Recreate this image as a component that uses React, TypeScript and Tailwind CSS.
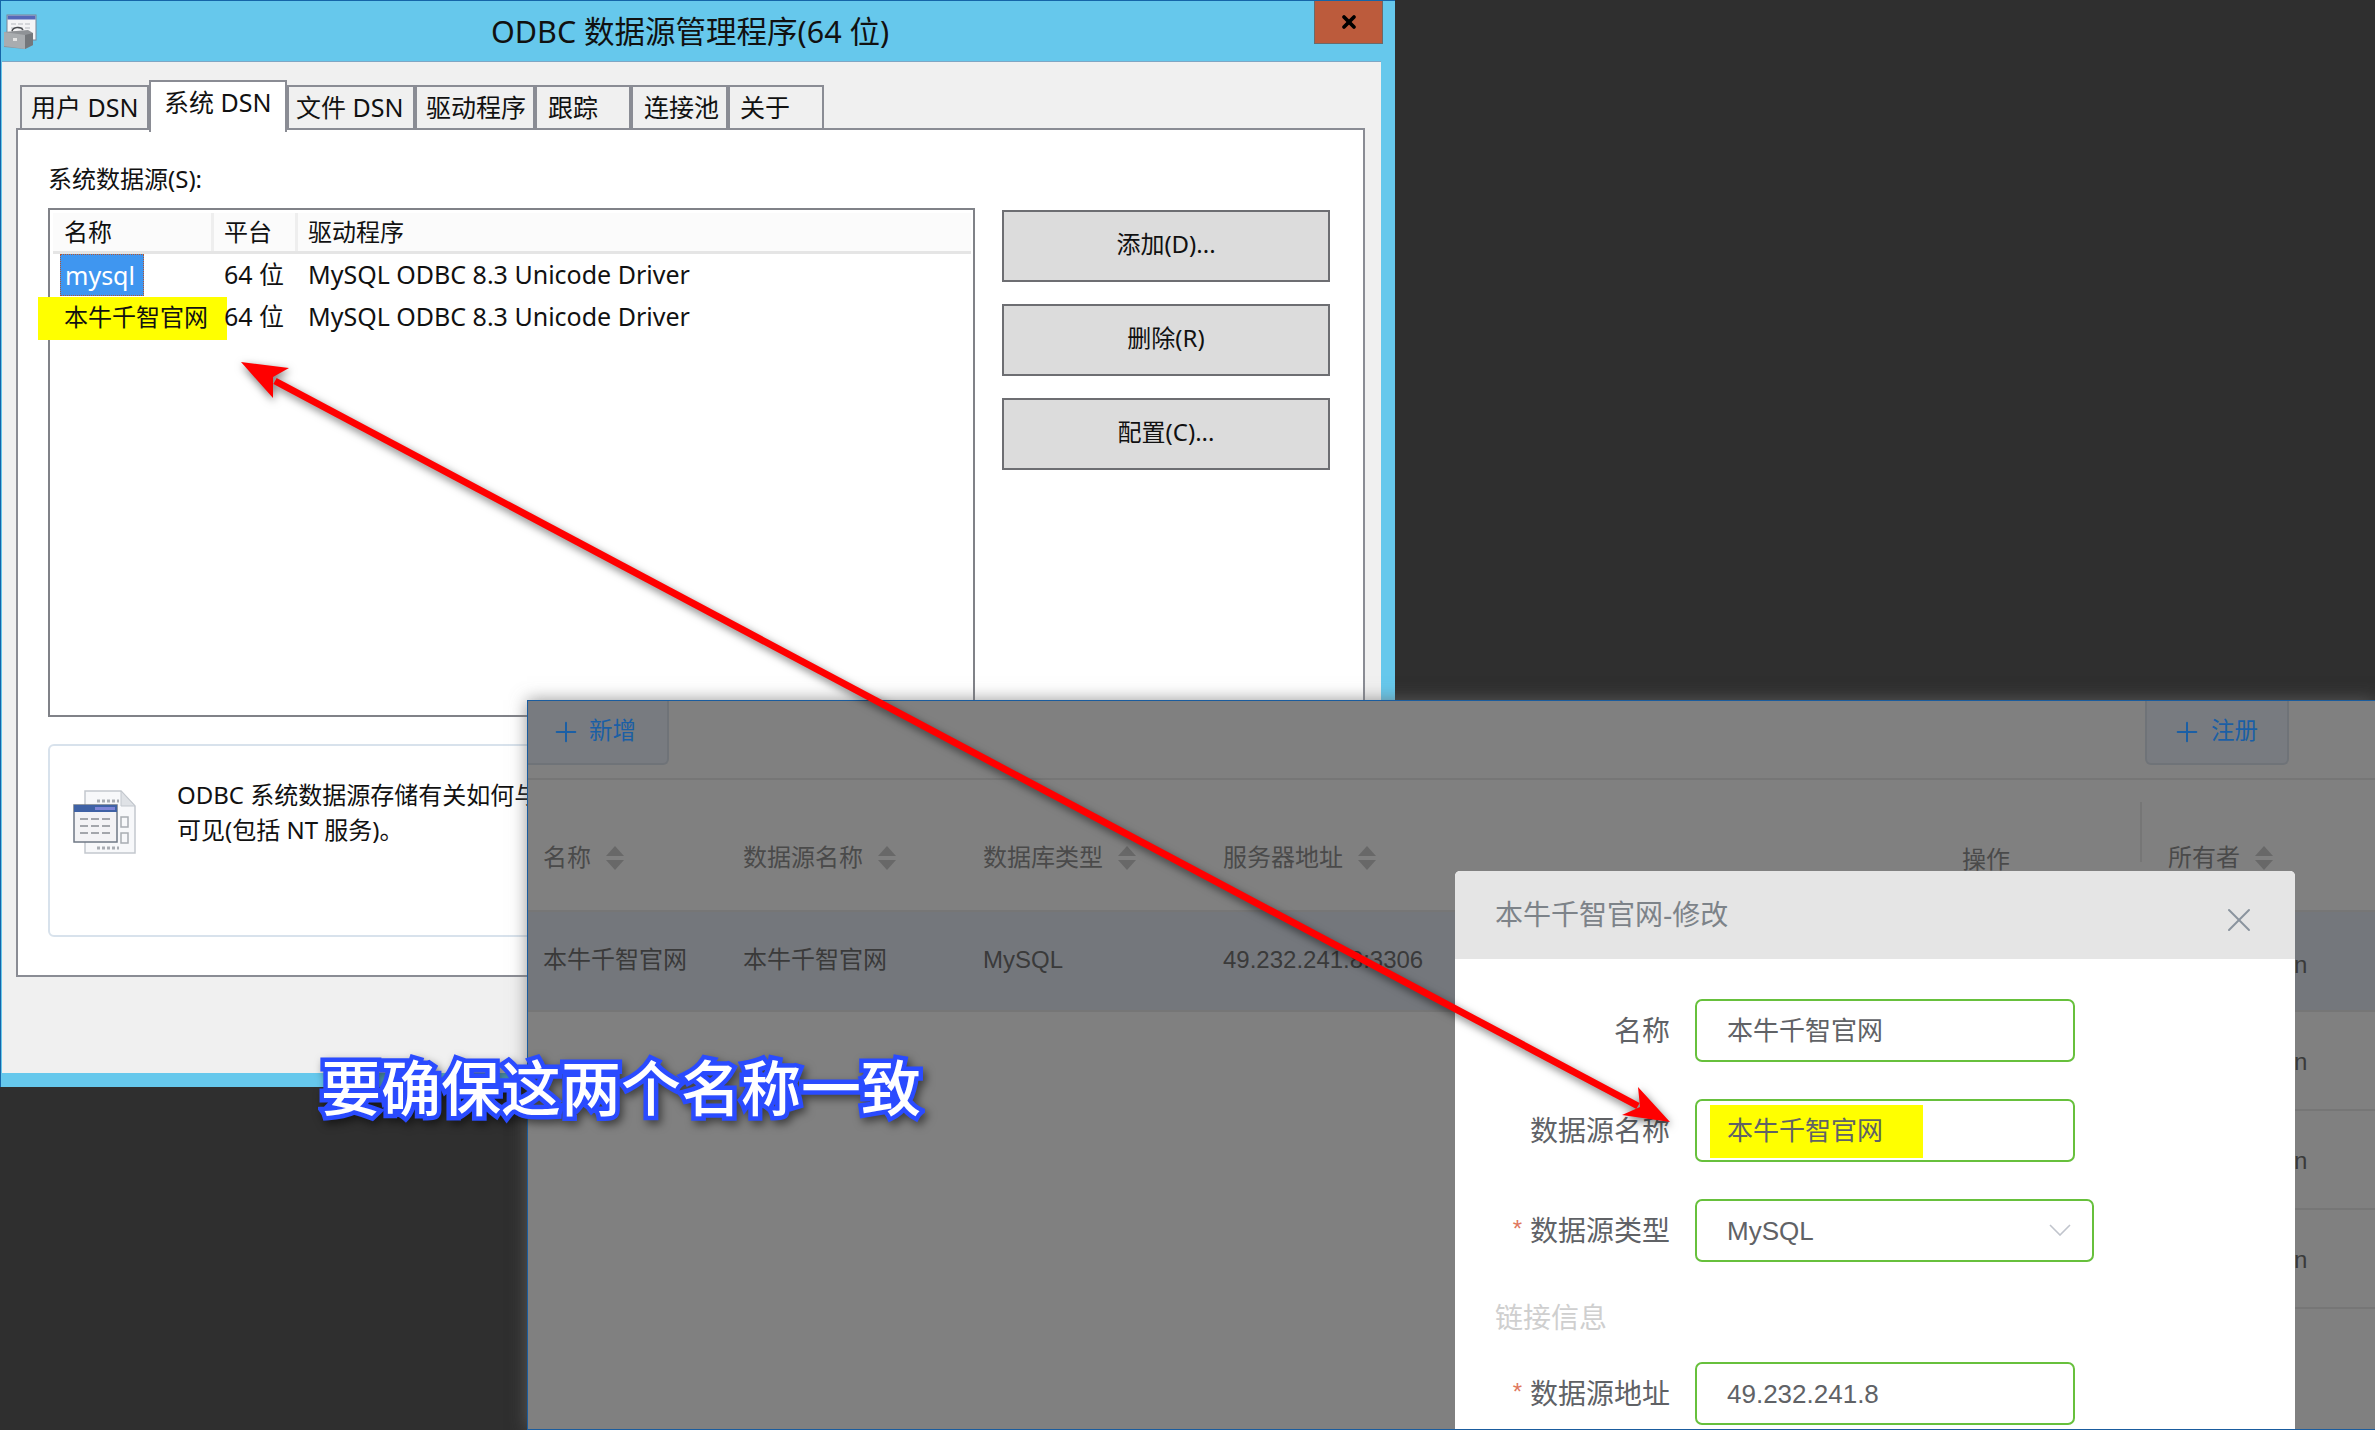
import React from 'react';
import { Plus, X } from 'lucide-react';

const tabs = [
  { label: '用户 DSN', w: 'w-[129px]', pl: 'pl-[9px]' },
  { label: '系统 DSN', w: 'w-[138px]', active: true, pl: 'pl-[13px]' },
  { label: '文件 DSN', w: 'w-[128px]', pl: 'pl-[7px]' },
  { label: '驱动程序', w: 'w-[120px]', pl: 'pl-[9px]' },
  { label: '跟踪', w: 'w-[96px]', pl: 'pl-[11px]' },
  { label: '连接池', w: 'w-[97px]', pl: 'pl-[11px]' },
  { label: '关于', w: 'w-[96px]', pl: 'pl-[10px]' },
];

function ToolboxIcon() {
  return (
    <svg width="34" height="36" viewBox="0 0 34 36" className="shrink-0">
      <rect x="3" y="1" width="29" height="25" fill="#f4f4f6" stroke="#7b8494" />
      <rect x="3.5" y="1.5" width="28" height="4" fill="#5568b8" />
      <path d="M7 10h20M7 14h20M7 18h20" stroke="#b5b8be" strokeDasharray="5 2" />
      <path d="M0 18l24-2 5 3v12l-8 4-21-2z" fill="#8f9296" />
      <path d="M0 18l21 3v14l-21-3z" fill="#a9acaf" />
      <path d="M21 21l8-2v12l-8 4z" fill="#74777b" />
      <path d="M8 17c1-4 9-5 11-1" fill="none" stroke="#4a4c50" strokeWidth="1.5" />
      <rect x="9" y="24" width="4" height="3" fill="#e4e4e4" />
    </svg>
  );
}

function SourceIcon() {
  return (
    <svg width="64" height="64" viewBox="0 0 64 64" className="shrink-0">
      <path d="M12 1h36l14 15v47H12z" fill="#f7f8fa" stroke="#c3c8ce" strokeWidth="1.5" />
      <path d="M48 1v15h14z" fill="#dfe2e6" stroke="#c3c8ce" />
      <path d="M24 11h22M24 58h22" stroke="#a9adb3" strokeWidth="3" strokeDasharray="3 2" />
      <rect x="48" y="27" width="7" height="10" fill="none" stroke="#a9adb3" strokeWidth="1.5" />
      <rect x="48" y="43" width="7" height="10" fill="none" stroke="#a9adb3" strokeWidth="1.5" />
      <rect x="1" y="15" width="43" height="37" fill="#f3f3f5" stroke="#6f7885" strokeWidth="1.5" />
      <rect x="1" y="15" width="43" height="7" fill="#3f62a5" />
      <rect x="22" y="17" width="20" height="3" fill="#7f86d8" />
      <path d="M7 29h32M7 36h32M7 43h32" stroke="#a3a6ab" strokeWidth="2" strokeDasharray="8 3" />
    </svg>
  );
}

function SortCaret() {
  return (
    <svg width="20" height="24" viewBox="0 0 20 24" className="shrink-0">
      <path d="M10 0l9 10H1z" fill="#686868" />
      <path d="M10 24l9-10H1z" fill="#686868" />
    </svg>
  );
}

function WinButton({ label }: { label: string }) {
  return (
    <div className="h-[72px] bg-[#dcdcdc] border-2 border-[#6d6e72] flex items-center justify-center pb-[4px] text-[24px] text-[#111]">
      {label}
    </div>
  );
}

function FormRow({ label, required, children }: { label: string; required?: boolean; children: React.ReactNode }) {
  return (
    <div className="flex items-center">
      <div className="w-[215px] pt-[2px] text-right text-[28px] text-[#606266] leading-none whitespace-nowrap">
        {required && <span className="text-[#e0785f] text-[24px] mr-[8px] align-[4px]">*</span>}
        {label}
      </div>
      <div className="ml-[25px]">{children}</div>
    </div>
  );
}

function GreenInput({ value, wide, children }: { value: string; wide?: boolean; children?: React.ReactNode }) {
  return (
    <div className={`${wide ? 'w-[399px]' : 'w-[380px]'} h-[63px] relative flex items-center pl-[30px] pt-[2px] rounded-[7px] border-2 border-[#67c03c] text-[26px] text-[#606266] bg-white`}>
      {children}
      <span className="relative">{value}</span>
    </div>
  );
}

export default function App() {
  return (
    <div className="relative w-[2375px] h-[1430px] overflow-hidden bg-[#2f2f2f] [font-family:'Noto_Sans','Noto_Sans_CJK_SC',sans-serif]">
      {/* odbc window */}
      <div className="absolute left-0 top-0 w-[1395px] h-[1087px] bg-[#66c8ec] border-t border-l border-[#1565a8] flex flex-col">
        <div className="h-[60px] flex items-start shrink-0">
          <div className="ml-[3px] mt-[13px]"><ToolboxIcon /></div>
          <div className="ml-[453px] mt-[10px] text-[30.5px] leading-[40px] text-[#111]">ODBC 数据源管理程序(64 位)</div>
          <div className="ml-auto mr-[12px] w-[69px] h-[43px] bg-[#bc5b3c] border border-[#6a6a6a] border-t-0 flex items-center justify-center">
            <X size={20} strokeWidth={4.5} color="#000" />
          </div>
        </div>
        <div className="ml-[1px] w-[1379px] h-[1012px] bg-[#f0f0f0] border-t border-[#7fa6c4] pl-[14px] pt-[18px]">
          <div className="flex items-end h-[48px] pl-[4px] relative z-10">
            {tabs.map((t) => (
              <div
                key={t.label}
                className={
                  t.active
                    ? `${t.w} ${t.pl} h-[52px] -mb-[4px] -mt-[4px] bg-white border-2 border-b-0 border-[#8a8c94] pt-[2px] text-[25px] leading-[36px] text-[#111]`
                    : `${t.w} ${t.pl} h-[43px] bg-[#f0f0f0] border-2 border-b-0 border-[#8a8c94] text-[25px] leading-[40px] text-[#111]`
                }
              >
                {t.label}
              </div>
            ))}
          </div>
          <div className="w-[1349px] h-[849px] bg-white border-2 border-[#8a8c94] pl-[30px] pt-[34px]">
            <div className="text-[24px] leading-[30px] text-[#111]">系统数据源(S):</div>
            <div className="flex mt-[14px]">
              <div className="w-[927px] h-[509px] border-2 border-[#808288] pl-[3px] pt-[3px] relative">
                <div className="flex h-[41px] w-[918px] text-[24px] text-[#111] border-b-[3px] border-[#e5e5e5] bg-[#fbfbfb]">
                  <div className="w-[161px] pl-[11px] border-r-[3px] border-[#eeeeee] leading-[38px]">名称</div>
                  <div className="w-[84px] pl-[10px] border-r-[3px] border-[#eeeeee] leading-[38px]">平台</div>
                  <div className="flex-1 pl-[10px] leading-[38px]">驱动程序</div>
                </div>
                <div className="flex h-[42px] items-center text-[25px] text-[#111]">
                  <div className="w-[161px] pl-[7px]">
                    <span className="inline-block w-[84px] h-[42px] bg-[#3f96f0] border border-dotted border-[#b5562f] text-white leading-[40px] pl-[4px]">mysql</span>
                  </div>
                  <div className="w-[84px] pl-[10px]">64 位</div>
                  <div className="pl-[10px]">MySQL ODBC 8.3 Unicode Driver</div>
                </div>
                <div className="flex h-[42px] items-center text-[25px] text-[#111]">
                  <div className="w-[161px] pl-[11px] relative text-[24px]">
                    <span className="absolute -left-[15px] -top-[2px] w-[189px] h-[43px] bg-[#ffff00]" />
                    <span className="relative">本牛千智官网</span>
                  </div>
                  <div className="w-[84px] pl-[10px] relative">64 位</div>
                  <div className="pl-[10px]">MySQL ODBC 8.3 Unicode Driver</div>
                </div>
              </div>
              <div className="ml-[27px] w-[328px] pt-[2px] flex flex-col gap-[22px]">
                <WinButton label="添加(D)..." />
                <WinButton label="删除(R)" />
                <WinButton label="配置(C)..." />
              </div>
            </div>
            <div className="mt-[27px] w-[1282px] h-[193px] rounded-[6px] border-2 border-[#d8e2ec] pl-[23px] pt-[44px] flex">
              <SourceIcon />
              <div className="ml-[40px] -mt-[13px] text-[24px] leading-[35px] text-[#111] whitespace-nowrap">
                <div>ODBC 系统数据源存储有关如何与指定数据提供程序连接的信息。系统数据源对此计算机上的所有用户</div>
                <div>可见(包括 NT 服务)。</div>
              </div>
            </div>
          </div>
        </div>
      </div>

      {/* web console with modal mask */}
      <div className="absolute left-[527px] top-[700px] w-[1848px] h-[730px] bg-[#808080] border-l border-t border-b border-[#1a5c9e] shadow-[0_0_16px_rgba(105,105,105,0.7)] [font-family:'Liberation_Sans','Noto_Sans_CJK_SC',sans-serif]">
        <div className="h-[79px] flex justify-between items-start border-b-[2px] border-[#767676] pr-[86px]">
          <div className="w-[141px] h-[64px] bg-[#787b80] border-2 border-t-0 border-l-0 border-[#6f7378] rounded-br-[6px] flex items-center pl-[22px] gap-[7px] text-[23.5px] text-[#1b5fa5]">
            <Plus size={32} strokeWidth={1.5} />
            新增
          </div>
          <div className="w-[144px] h-[64px] bg-[#787b80] border-2 border-t-0 border-[#6f7378] rounded-b-[6px] flex items-center pl-[24px] gap-[8px] text-[23.5px] text-[#1b5fa5]">
            <Plus size={32} strokeWidth={1.5} />
            注册
          </div>
        </div>
        <div className="h-[130px] pl-[15px] pt-[26px] flex items-center text-[24px] text-[#4a4a4a]">
          <div className="w-[200px] flex items-center gap-[14px]">名称<SortCaret /></div>
          <div className="w-[240px] flex items-center gap-[14px]">数据源名称<SortCaret /></div>
          <div className="w-[240px] flex items-center gap-[14px]">数据库类型<SortCaret /></div>
          <div className="w-[739px] flex items-center gap-[14px]">服务器地址<SortCaret /></div>
          <div className="w-[206px] pt-[4px]">操作</div>
          <div className="relative flex items-center gap-[14px]">
            <span className="absolute -left-[28px] -top-[38px] h-[60px] w-[2px] bg-[#767676]" />
            所有者<SortCaret />
          </div>
        </div>
        <div className="h-[102px] bg-[#74777c] border-b-[2px] border-t-[2px] border-[#767676] pl-[15px] pb-[2px] flex items-center text-[24px] text-[#3a3a3a]">
          <div className="w-[200px]">本牛千智官网</div>
          <div className="w-[240px]">本牛千智官网</div>
          <div className="w-[240px]">MySQL</div>
          <div className="w-[1019px]">49.232.241.8:3306</div>
          <div className="pt-[10px]">admin</div>
        </div>
        {[0, 1, 2].map((i) => (
          <div key={i} className="h-[99px] flex">
            <div className="ml-[1714px] flex-1 border-b-[2px] border-[#767676] pt-[3px] flex items-center text-[24px] text-[#3a3a3a]">
              admin
            </div>
          </div>
        ))}

        <div className="absolute left-[927px] top-[170px] bottom-0 w-[840px] bg-white rounded-t-[5px]">
          <div className="h-[88px] bg-[#e5e5e5] rounded-t-[5px] flex items-start justify-between pl-[40px] pr-[36px] text-[28px] text-[#7d8389]">
            <span className="mt-[24px]">本牛千智官网-修改</span>
            <X size={40} strokeWidth={1.2} color="#8a949e" className="mt-[29px]" />
          </div>
          <div className="pt-[40px] flex flex-col gap-[37px]">
            <FormRow label="名称"><GreenInput value="本牛千智官网" /></FormRow>
            <FormRow label="数据源名称">
              <GreenInput value="本牛千智官网">
                <span className="absolute left-[13px] top-[4px] w-[213px] h-[53px] bg-[#ffff00]" />
              </GreenInput>
            </FormRow>
            <FormRow label="数据源类型" required>
              <GreenInput value="MySQL" wide>
                <svg width="22" height="12" viewBox="0 0 22 12" className="absolute right-[21px] top-[23px]">
                  <path d="M1 1l10 10L21 1" fill="none" stroke="#c0c4cc" strokeWidth="1.6" />
                </svg>
              </GreenInput>
            </FormRow>
          </div>
          <div className="pl-[40px] mt-[37px] text-[28px] leading-[40px] text-[#cfcfcf]">链接信息</div>
          <div className="mt-[23px]">
            <FormRow label="数据源地址" required><GreenInput value="49.232.241.8" /></FormRow>
          </div>
        </div>
      </div>

      {/* annotations */}
      <svg width="2375" height="1430" viewBox="0 0 2375 1430" className="absolute left-0 top-0 pointer-events-none drop-shadow-[1px_3px_4px_rgba(0,0,0,0.55)]">
        <path d="M275 381L1638 1106" stroke="#ff0000" strokeWidth="7" />
        <path d="M241 362L289 368L273 377L273 398Z" fill="#ff0000" />
        <path d="M1670 1122L1638 1087L1640 1107L1622 1115Z" fill="#ff0000" />
      </svg>
      <div className="absolute left-[321px] top-[1040px] text-[60px] leading-[90px] font-medium whitespace-nowrap text-white [-webkit-text-stroke:9px_#2a4bff] [paint-order:stroke_fill] drop-shadow-[3px_4px_4px_rgba(0,0,0,0.5)] [font-family:'Noto_Sans_CJK_SC',sans-serif]">
        要确保这两个名称一致
      </div>
    </div>
  );
}
